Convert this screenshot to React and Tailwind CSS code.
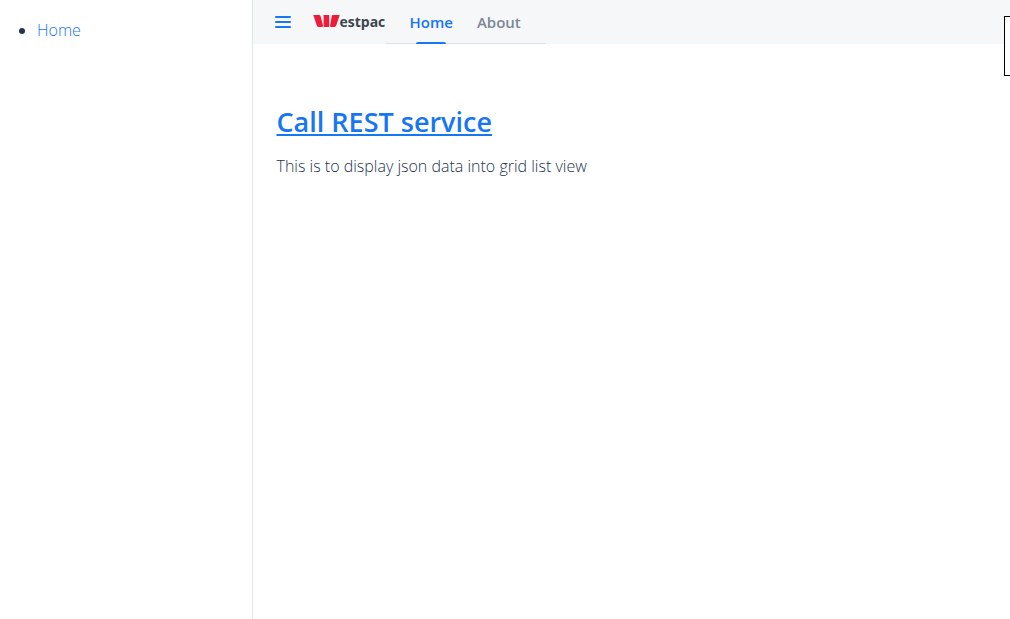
const tabs = [
  { label: 'Home', active: true },
  { label: 'About', active: false },
];

function MenuIcon() {
  return (
    <svg width="16" height="12" viewBox="0 0 16 12" aria-hidden="true">
      <g fill="#1676f3">
        <rect x="0" y="0" width="16" height="2" rx="1" />
        <rect x="0" y="5" width="16" height="2" rx="1" />
        <rect x="0" y="10" width="16" height="2" rx="1" />
      </g>
    </svg>
  );
}

function Logo() {
  return (
    <a href="#home" className="flex h-11 w-[73px] items-center" aria-label="Westpac">
      <svg width="27" height="12" viewBox="0 0 27 12" className="mb-0.5 shrink-0" aria-hidden="true">
        <g fill="#ee1c38">
          <path d="M0.3 0H6Q7.2 0 7.6 1.2L10 10.6Q10.4 12 9.2 12H5.6Q4.2 12 3.8 10.6Z" />
          <path d="M10.6 0H16.2V12H10.6Z" />
          <path d="M19.6 0H26.7L23.2 10.6Q22.8 12 21.4 12H17.8Q16.8 12 17.1 10.6L18.8 1Q19 0 19.6 0Z" />
        </g>
      </svg>
      <span className="text-sm leading-5 font-bold text-[#3d464d]">estpac</span>
    </a>
  );
}

export default function App() {
  return (
    <div className="relative flex min-h-screen overflow-hidden bg-white font-['Open_Sans',sans-serif] text-base text-[#24344d]">
      <aside className="w-1/4 shrink-0 border-r border-[#e4e8ed] pt-4 pl-[37px]">
        <ul className="list-disc">
          <li className="leading-7">
            <a href="#home" className="font-light text-[#1676f3]">Home</a>
          </li>
        </ul>
      </aside>

      <div className="min-w-0 flex-1">
        <header className="flex h-11 items-center bg-[#f5f7f9] pl-[22px]">
          <button type="button" aria-label="Toggle menu" className="mr-[22px]">
            <MenuIcon />
          </button>
          <Logo />
          <nav className="flex h-full w-40 border-b border-[#dce2ea] pl-3 text-[15px]">
            {tabs.map((tab) => (
              <a
                key={tab.label}
                href={'#' + tab.label.toLowerCase()}
                aria-current={tab.active ? 'page' : undefined}
                className={
                  tab.active
                    ? 'relative flex items-center px-3 pt-0.5 font-semibold text-[#1676f3]'
                    : 'relative flex items-center px-3 pt-0.5 font-semibold text-[#7c8796]'
                }
              >
                {tab.label}
                {tab.active && (
                  <span className="absolute -bottom-px left-1/2 h-0.5 w-[30px] -translate-x-1/2 rounded-t-sm bg-[#1676f3]" />
                )}
              </a>
            ))}
          </nav>
        </header>

        <main className="px-6 pt-[60px]">
          <h2 className="text-[27px] leading-9 font-semibold">
            <a href="#rest" className="text-[#1676f3] underline decoration-2 underline-offset-2">
              Call REST service
            </a>
          </h2>
          <p className="mt-3 leading-7 font-light">This is to display json data into grid list view</p>
        </main>
      </div>

      <div className="absolute top-4 left-full -ml-1.5 h-[60px] w-20 border border-black bg-white" />
    </div>
  );
}
